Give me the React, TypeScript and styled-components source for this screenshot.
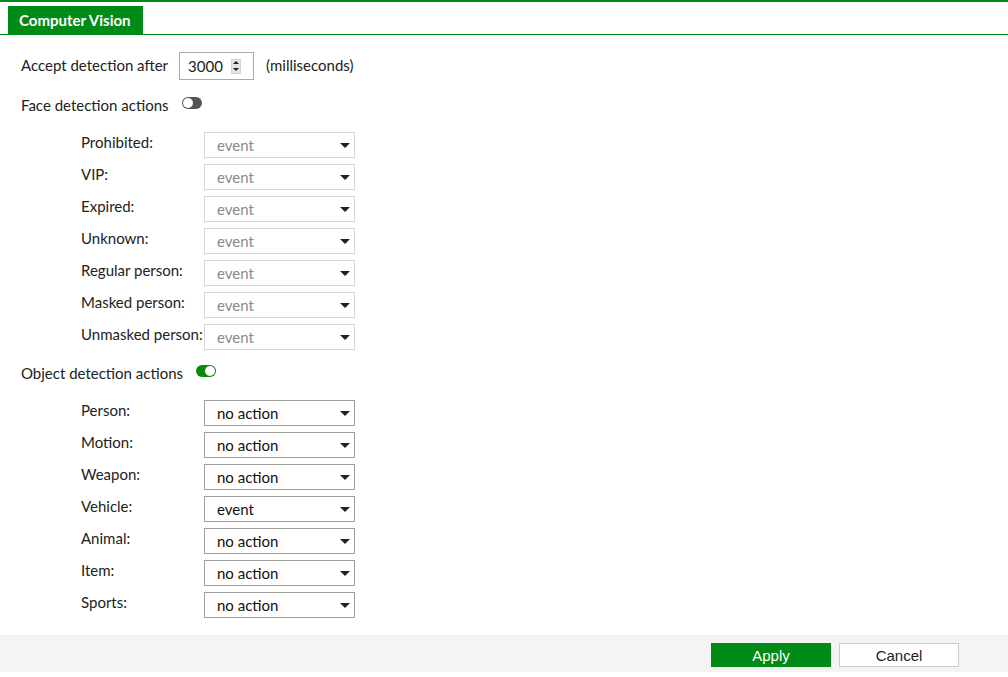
import React, { FC } from 'react'
import styled, { createGlobalStyle } from 'styled-components'

const GlobalStyle = createGlobalStyle`
  body {
    margin: 0;
    background: #fff;
    font-family: Lato, 'Open Sans', sans-serif;
    color: #333;
  }
`

const green = '#008a16'

const Page = styled.div`
  width: 1008px;
  height: 677px;
  display: flex;
  flex-direction: column;
  border-top: 2px solid ${green};
  box-sizing: border-box;
  overflow: hidden;
`

const TabStrip = styled.div`
  display: flex;
  padding: 4px 0 0 8px;
  border-bottom: 1px solid ${green};
`

const Tab = styled.div`
  height: 28px;
  display: flex;
  align-items: center;
  padding: 0 12px 0 11px;
  background: ${green};
  color: #fff;
  font-weight: 700;
  font-size: 15px;
`

const Content = styled.div`
  flex: 1;
  padding: 17px 21px 0;
`

const InlineRow = styled.div`
  display: flex;
  align-items: center;
  font-size: 15px;
  line-height: 18px;
  color: #222;
`

const AcceptText = styled.span`
  margin-top: -2px;
`

const NumberBox = styled.div`
  width: 75px;
  height: 28px;
  box-sizing: border-box;
  border: 1px solid #aaa;
  margin: 0 12px 0 11px;
  display: flex;
  align-items: center;
  padding-left: 8px;
  font-size: 15px;
  gap: 8px;
`

const Spinner = styled.div`
  width: 10px;
  height: 15px;
  background: #e4e4e4;
  display: flex;
  flex-direction: column;
  align-items: center;
  justify-content: space-around;
  border: 1px solid #d4d4d4;
  box-sizing: border-box;
`

const Tri = styled.span<{ $up?: boolean }>`
  width: 0;
  height: 0;
  border-left: 3px solid transparent;
  border-right: 3px solid transparent;
  ${({ $up }) =>
    $up ? 'border-bottom: 3px solid #222;' : 'border-top: 3px solid #222;'}
`

const SectionHeader = styled(InlineRow)<{ $top: number }>`
  height: 20px;
  margin-top: ${({ $top }) => $top}px;
`

const Toggle = styled.span<{ $on?: boolean; $gap: number }>`
  width: 20px;
  height: 12px;
  border-radius: 6px;
  margin-left: ${({ $gap }) => $gap}px;
  margin-top: -4px;
  background: ${({ $on }) => ($on ? '#078a0c' : '#555')};
  display: flex;
  align-items: center;
  justify-content: ${({ $on }) => ($on ? 'flex-end' : 'flex-start')};
  padding: 0 1px;
  box-sizing: border-box;

  &::after {
    content: '';
    width: 10px;
    height: 10px;
    border-radius: 50%;
    background: #fff;
  }
`

const Rows = styled.div`
  display: flex;
  flex-direction: column;
  gap: 6px;
  margin-top: 17px;
  padding-left: 60px;
`

const Row = styled.div`
  display: flex;
  align-items: flex-start;
  height: 26px;
`

const Label = styled.div`
  width: 123px;
  font-size: 15px;
  line-height: 20px;
  color: #222;
`

const Select = styled.div<{ $disabled?: boolean }>`
  position: relative;
  width: 151px;
  height: 26px;
  box-sizing: border-box;
  border: 1px solid ${({ $disabled }) => ($disabled ? '#d6d6d6' : '#a0a0a0')};
  padding: 0 0 0 12px;
  display: flex;
  align-items: center;
  font-size: 15px;
  color: ${({ $disabled }) => ($disabled ? '#8a8a8a' : '#111')};

  &::after {
    content: '';
    position: absolute;
    right: 4px;
    top: 10px;
    border-left: 5px solid transparent;
    border-right: 5px solid transparent;
    border-top: 5px solid #222;
  }
`

const Footer = styled.div`
  height: 37px;
  margin-bottom: 5px;
  background: #f4f4f4;
  display: flex;
  justify-content: flex-end;
  align-items: center;
  gap: 8px;
  padding: 2px 49px 0 0;
  box-sizing: border-box;
`

const Button = styled.button<{ $primary?: boolean }>`
  width: 120px;
  height: 24px;
  box-sizing: border-box;
  font-family: 'Liberation Sans', Arial, sans-serif;
  font-size: 15px;
  padding: 1px 0 0;
  border: 1px solid ${({ $primary }) => ($primary ? green : '#ccc')};
  background: ${({ $primary }) => ($primary ? green : '#fff')};
  color: ${({ $primary }) => ($primary ? '#fff' : '#222')};
`

const faceRows = [
  'Prohibited:',
  'VIP:',
  'Expired:',
  'Unknown:',
  'Regular person:',
  'Masked person:',
  'Unmasked person:'
]

const objectRows: [string, string][] = [
  ['Person:', 'no action'],
  ['Motion:', 'no action'],
  ['Weapon:', 'no action'],
  ['Vehicle:', 'event'],
  ['Animal:', 'no action'],
  ['Item:', 'no action'],
  ['Sports:', 'no action']
]

const App: FC = () => (
  <>
    <GlobalStyle />
    <Page>
      <TabStrip>
        <Tab>Computer Vision</Tab>
      </TabStrip>
      <Content>
        <InlineRow>
          <AcceptText>Accept detection after</AcceptText>
          <NumberBox>
            3000
            <Spinner>
              <Tri $up />
              <Tri />
            </Spinner>
          </NumberBox>
          <AcceptText>(milliseconds)</AcceptText>
        </InlineRow>
        <SectionHeader $top={15}>
          Face detection actions
          <Toggle $gap={13} />
        </SectionHeader>
        <Rows>
          {faceRows.map((name) => (
            <Row key={name}>
              <Label>{name}</Label>
              <Select $disabled>event</Select>
            </Row>
          ))}
        </Rows>
        <SectionHeader $top={13}>
          Object detection actions
          <Toggle $on $gap={13} />
        </SectionHeader>
        <Rows>
          {objectRows.map(([name, value]) => (
            <Row key={name}>
              <Label>{name}</Label>
              <Select>{value}</Select>
            </Row>
          ))}
        </Rows>
      </Content>
      <Footer>
        <Button $primary>Apply</Button>
        <Button>Cancel</Button>
      </Footer>
    </Page>
  </>
)

export default App
